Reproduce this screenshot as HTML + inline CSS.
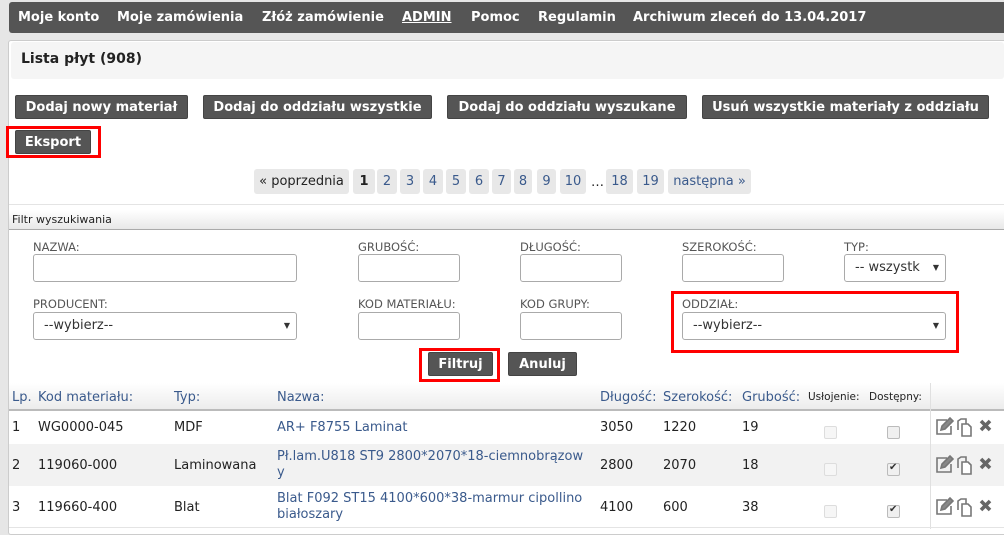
<!DOCTYPE html>
<html><head><meta charset="utf-8"><style>
*{box-sizing:border-box;margin:0;padding:0}
body{width:1004px;height:529px;overflow:hidden;background:#e6e6e6;font-family:"DejaVu Sans","Liberation Sans",sans-serif;font-size:13px;color:#222;position:relative}
.a{position:absolute;white-space:nowrap}
.nav{left:9px;top:2px;width:1000px;height:31px;background:#555;border-radius:3px}
.nav span{position:absolute;top:8px;color:#fff;font-weight:bold;font-size:13px}
.panel{left:8px;top:40px;width:1000px;height:495px;background:#fff;border:1px solid #ccc;border-radius:3px}
.btn{position:absolute;background:#555;color:#fff;font-weight:bold;font-size:13px;border:1px solid #444;border-radius:2px;text-align:center;line-height:23px;height:24px}
.red{position:absolute;border:3px solid #f00}
.pg{position:absolute;top:169px;height:25px;background:#e8e8e8;border-radius:3px;color:#3a5a8c;line-height:25px;text-align:center;font-size:13px}
.lbl{position:absolute;font-size:11.5px;color:#555}
.inp{position:absolute;height:28px;border:1px solid #aaa;border-radius:3px;background:#fff}
.sel{font-size:13px;color:#333;padding-left:10px;line-height:26px}
.sel:after{content:"▼";position:absolute;right:6px;top:0;font-size:8px;color:#333}
.th{position:absolute;top:390px;color:#3a5a8c;font-size:13px}
.td{position:absolute;font-size:13px}
.lk{color:#3a5a8c}
.cb{position:absolute;width:13px;height:13px;border:1px solid #bbb;border-radius:2px;background:#f0f0f0}
.ck:after{content:"✔";position:absolute;left:1px;top:-2px;font-size:10px;color:#333}
</style></head><body>
<div class="a nav">
<span style="left:9px">Moje konto</span>
<span style="left:108px">Moje zamówienia</span>
<span style="left:253px">Złóż zamówienie</span>
<span style="left:393px;text-decoration:underline">ADMIN</span>
<span style="left:462px">Pomoc</span>
<span style="left:529px">Regulamin</span>
<span style="left:624px">Archiwum zleceń do 13.04.2017</span>
</div>
<div class="a panel"></div>
<div class="a" style="left:11px;top:42px;width:993px;height:37px;background:#f5f5f5;border-radius:3px"></div>
<div class="a" style="left:21px;top:51px;font-weight:bold;font-size:14px">Lista płyt (908)</div>

<div class="btn" style="left:15px;top:95px;width:173px">Dodaj nowy materiał</div>
<div class="btn" style="left:203px;top:95px;width:229px">Dodaj do oddziału wszystkie</div>
<div class="btn" style="left:447px;top:95px;width:240px">Dodaj do oddziału wyszukane</div>
<div class="btn" style="left:702px;top:95px;width:287px">Usuń wszystkie materiały z oddziału</div>
<div class="btn" style="left:15px;top:130px;width:76px">Eksport</div>
<div class="red" style="left:6px;top:126px;width:95px;height:32px"></div>

<div class="pg" style="left:254px;width:95px;color:#222">« poprzednia</div>
<div class="pg" style="left:353px;width:22px;color:#222;font-weight:bold">1</div>
<div class="pg" style="left:377px;width:20px">2</div>
<div class="pg" style="left:400px;width:20px">3</div>
<div class="pg" style="left:423px;width:20px">4</div>
<div class="pg" style="left:446px;width:20px">5</div>
<div class="pg" style="left:469px;width:20px">6</div>
<div class="pg" style="left:492px;width:19px">7</div>
<div class="pg" style="left:514px;width:18px">8</div>
<div class="pg" style="left:537px;width:19px">9</div>
<div class="pg" style="left:560px;width:26px">10</div>
<div class="a" style="left:591px;top:175px">…</div>
<div class="pg" style="left:606px;width:27px">18</div>
<div class="pg" style="left:637px;width:27px">19</div>
<div class="pg" style="left:668px;width:83px">następna »</div>

<div class="a" style="left:9px;top:204px;width:995px;height:1px;background:#e4e4e4"></div>
<div class="a" style="left:9px;top:210px;width:995px;height:20px;background:linear-gradient(#fff,#e8e8e8);border-bottom:1px solid #aaa"></div>
<div class="a" style="left:12px;top:213px;font-size:11px">Filtr wyszukiwania</div>

<div class="lbl" style="left:33px;top:240px">NAZWA:</div>
<div class="inp" style="left:33px;top:254px;width:264px"></div>
<div class="lbl" style="left:358px;top:240px">GRUBOŚĆ:</div>
<div class="inp" style="left:358px;top:254px;width:102px"></div>
<div class="lbl" style="left:520px;top:240px">DŁUGOŚĆ:</div>
<div class="inp" style="left:520px;top:254px;width:102px"></div>
<div class="lbl" style="left:682px;top:240px">SZEROKOŚĆ:</div>
<div class="inp" style="left:682px;top:254px;width:102px"></div>
<div class="lbl" style="left:844px;top:240px">TYP:</div>
<div class="inp sel" style="left:844px;top:254px;width:102px;overflow:hidden;padding-right:20px">-- wszystk</div>

<div class="lbl" style="left:33px;top:297px">PRODUCENT:</div>
<div class="inp sel" style="left:33px;top:312px;width:264px">--wybierz--</div>
<div class="lbl" style="left:358px;top:297px">KOD MATERIAŁU:</div>
<div class="inp" style="left:358px;top:312px;width:102px"></div>
<div class="lbl" style="left:520px;top:297px">KOD GRUPY:</div>
<div class="inp" style="left:520px;top:312px;width:102px"></div>
<div class="lbl" style="left:682px;top:297px">ODDZIAŁ:</div>
<div class="inp sel" style="left:682px;top:312px;width:264px">--wybierz--</div>
<div class="red" style="left:671px;top:291px;width:288px;height:62px"></div>

<div class="btn" style="left:428px;top:352px;width:65px">Filtruj</div>
<div class="red" style="left:419px;top:348px;width:81px;height:34px"></div>
<div class="btn" style="left:508px;top:352px;width:69px">Anuluj</div>

<div class="a" style="left:9px;top:383px;width:995px;height:28px;background:linear-gradient(#fff,#ececec);border-bottom:2px solid #bbb"></div>
<div class="a" style="left:930px;top:383px;width:1px;height:146px;background:#e0e0e0"></div>
<div class="th" style="left:12px">Lp.</div>
<div class="th" style="left:38px">Kod materiału:</div>
<div class="th" style="left:174px">Typ:</div>
<div class="th" style="left:277px">Nazwa:</div>
<div class="th" style="left:600px">Długość:</div>
<div class="th" style="left:663px">Szerokość:</div>
<div class="th" style="left:742px">Grubość:</div>
<div class="th" style="left:808px;font-size:10.5px;top:391px;color:#222">Usłojenie:</div>
<div class="th" style="left:869px;font-size:10.5px;top:391px;color:#222">Dostępny:</div>

<div class="a" style="left:9px;top:444px;width:921px;height:42px;background:#f2f2f2"></div>
<div class="a" style="left:931px;top:444px;width:73px;height:42px;background:#f2f2f2"></div>
<div class="a" style="left:9px;top:527px;width:995px;height:1px;background:#e4e4e4"></div>

<div class="td" style="left:12px;top:420px">1</div>
<div class="td" style="left:38px;top:420px">WG0000-045</div>
<div class="td" style="left:174px;top:420px">MDF</div>
<div class="td lk" style="left:277px;top:420px">AR+ F8755 Laminat</div>
<div class="td" style="left:600px;top:420px">3050</div>
<div class="td" style="left:663px;top:420px">1220</div>
<div class="td" style="left:742px;top:420px">19</div>

<div class="td" style="left:12px;top:458px">2</div>
<div class="td" style="left:38px;top:458px">119060-000</div>
<div class="td" style="left:174px;top:458px">Laminowana</div>
<div class="td lk" style="left:277px;top:449px;line-height:16px">Pł.lam.U818 ST9 2800*2070*18-ciemnobrązow<br>y</div>
<div class="td" style="left:600px;top:458px">2800</div>
<div class="td" style="left:663px;top:458px">2070</div>
<div class="td" style="left:742px;top:458px">18</div>

<div class="td" style="left:12px;top:500px">3</div>
<div class="td" style="left:38px;top:500px">119660-400</div>
<div class="td" style="left:174px;top:500px">Blat</div>
<div class="td lk" style="left:277px;top:491px;line-height:16px">Blat F092 ST15 4100*600*38-marmur cipollino<br>białoszary</div>
<div class="td" style="left:600px;top:500px">4100</div>
<div class="td" style="left:663px;top:500px">600</div>
<div class="td" style="left:742px;top:500px">38</div>

<div class="cb" style="left:824px;top:426px;border-color:#ddd;background:#f6f6f6"></div>
<div class="cb" style="left:887px;top:426px"></div>
<div class="cb" style="left:824px;top:463px;border-color:#ddd;background:#f6f6f6"></div>
<div class="cb ck" style="left:887px;top:463px"></div>
<div class="cb" style="left:824px;top:505px;border-color:#ddd;background:#f6f6f6"></div>
<div class="cb ck" style="left:887px;top:505px"></div>

<svg class="a" style="left:934px;top:416px" width="66" height="110" viewBox="0 0 66 110">
<g id="ic" fill="none" stroke="#777" stroke-width="1.6">
<path d="M13 4H3v14h14V10"/><path d="M7 14l1-4 8-8 3 3-8 8z" fill="#888"/>
<path d="M24 14V5l3-2h5v5"/><path d="M28 8h6l3 3v9h-9z" fill="#fff"/>
<path d="M47 5l9 9M56 5l-9 9" stroke="#666" stroke-width="3.6"/>
</g>
<use href="#ic" y="38"/><use href="#ic" y="80"/>
</svg>
</body></html>
